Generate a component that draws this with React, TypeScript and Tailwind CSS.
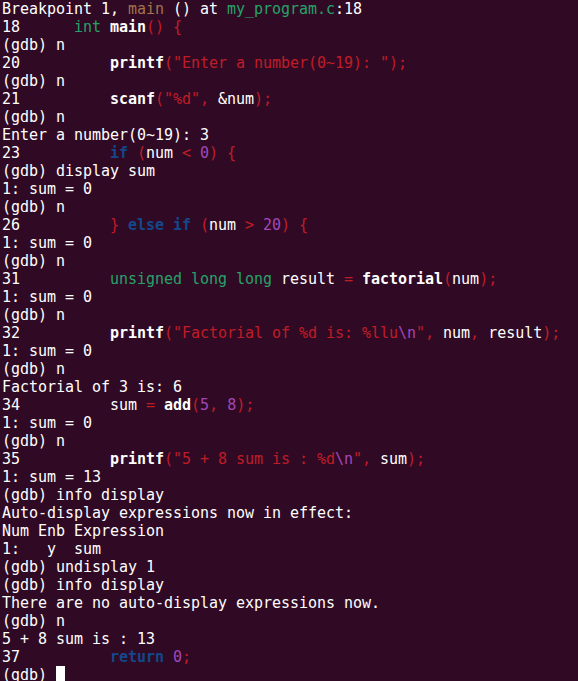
type Seg = [string, string?];

// ubuntu yaru terminal palette
const W = "";
const B = "font-bold";
const R = "text-[#c01c28]";
const G = "text-[#26a269]";
const Y = "text-[#a2734c]";
const K = "text-[#12488b] font-bold";
const M = "text-[#a347ba]";

const pad = "          ";

const lines: Seg[][] = [
  [["Breakpoint 1, "], ["main", Y], [" () at "], ["my_program.c", G], [":18"]],
  [["18      "], ["int", G], [" "], ["main", B], ["() {", R]],
  [["(gdb) n"]],
  [["20" + pad], ["printf", B], ['("Enter a number(0~19): ");', R]],
  [["(gdb) n"]],
  [["21" + pad], ["scanf", B], ['("%d", ', R], ["&num"], [");", R]],
  [["(gdb) n"]],
  [["Enter a number(0~19): 3"]],
  [["23" + pad], ["if", K], [" (", R], ["num"], [" < ", R], ["0", M], [") {", R]],
  [["(gdb) display sum"]],
  [["1: sum = 0"]],
  [["(gdb) n"]],
  [["26" + pad], ["} ", R], ["else if", K], [" (", R], ["num"], [" > ", R], ["20", M], [") {", R]],
  [["1: sum = 0"]],
  [["(gdb) n"]],
  [["31" + pad], ["unsigned long long", G], [" result "], ["=", R], [" "], ["factorial", B], ["(", R], ["num"], [");", R]],
  [["1: sum = 0"]],
  [["(gdb) n"]],
  [["32" + pad], ["printf", B], ['("Factorial of %d is: %llu', R], ["\\n", M], ['", ', R], ["num"], [", ", R], ["result"], [");", R]],
  [["1: sum = 0"]],
  [["(gdb) n"]],
  [["Factorial of 3 is: 6"]],
  [["34" + pad], ["sum "], ["=", R], [" "], ["add", B], ["(", R], ["5", M], [", ", R], ["8", M], [");", R]],
  [["1: sum = 0"]],
  [["(gdb) n"]],
  [["35" + pad], ["printf", B], ['("5 + 8 sum is : %d', R], ["\\n", M], ['", ', R], ["sum"], [");", R]],
  [["1: sum = 13"]],
  [["(gdb) info display"]],
  [["Auto-display expressions now in effect:"]],
  [["Num Enb Expression"]],
  [["1:   y  sum"]],
  [["(gdb) undisplay 1"]],
  [["(gdb) info display"]],
  [["There are no auto-display expressions now."]],
  [["(gdb) n"]],
  [["5 + 8 sum is : 13"]],
  [["37" + pad], ["return", K], [" "], ["0", M], [";", R]],
];

export default function App() {
  return (
    <div className="w-[578px] h-[681px] overflow-hidden bg-[#300a24] text-white pl-[2px] font-['DejaVu_Sans_Mono',monospace] text-[15px] leading-[18px] tracking-[-0.03px]">
      {lines.map((segs, i) => (
        <div key={i} className="h-[18px] whitespace-pre">
          {segs.map(([text, cls], j) => (
            <span key={j} className={cls ?? W}>
              {text}
            </span>
          ))}
        </div>
      ))}
      <div className="h-[18px] whitespace-pre flex items-stretch">
        <span>(gdb) </span>
        <span className="w-[9px] bg-white" />
      </div>
    </div>
  );
}
